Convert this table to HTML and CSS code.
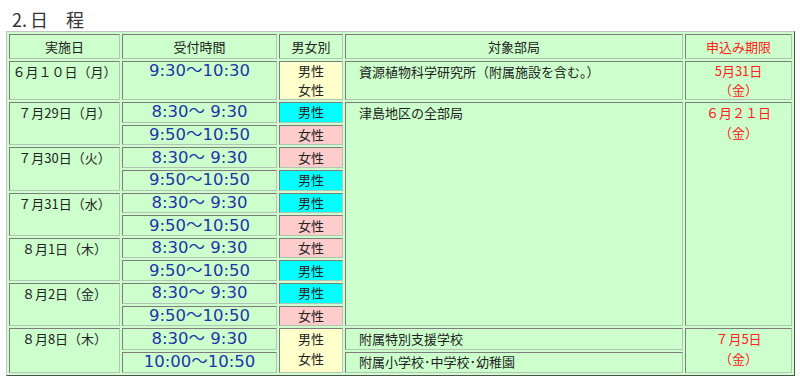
FILE: index.html
```html
<!DOCTYPE html>
<html lang="ja">
<head>
<meta charset="utf-8">
<title>日程</title>
<link rel="stylesheet" href="styles.css">
</head>
<body>
<div class="title"><span class="num">2.</span>日　程</div>
<table class="sched">
  <colgroup>
    <col class="c1"><col class="c2"><col class="c3"><col class="c4"><col class="c5">
  </colgroup>
  <tr class="hd">
    <th>実施日</th><th>受付時間</th><th>男女別</th><th>対象部局</th><th class="red">申込み期限</th>
  </tr>
  <tr class="ra">
    <td class="date">６月１０日（月）</td>
    <td class="time top">9:30～10:30</td>
    <td class="sex both top">男性<br>女性</td>
    <td class="dept top">資源植物科学研究所（附属施設を含む。）</td>
    <td class="dl">5月31日<br>（金）</td>
  </tr>
  <tr class="rb">
    <td class="date" rowspan="2">７月29日（月）</td>
    <td class="time">8:30～ 9:30</td>
    <td class="sex m">男性</td>
    <td class="dept top" rowspan="10">津島地区の全部局</td>
    <td class="dl" rowspan="10">６月２１日<br>（金）</td>
  </tr>
  <tr class="rb"><td class="time">9:50～10:50</td><td class="sex f">女性</td></tr>
  <tr class="rb">
    <td class="date" rowspan="2">７月30日（火）</td>
    <td class="time">8:30～ 9:30</td><td class="sex f">女性</td>
  </tr>
  <tr class="rb"><td class="time">9:50～10:50</td><td class="sex m">男性</td></tr>
  <tr class="rb">
    <td class="date" rowspan="2">７月31日（水）</td>
    <td class="time">8:30～ 9:30</td><td class="sex m">男性</td>
  </tr>
  <tr class="rb"><td class="time">9:50～10:50</td><td class="sex f">女性</td></tr>
  <tr class="rb">
    <td class="date" rowspan="2">８月1日（木）</td>
    <td class="time">8:30～ 9:30</td><td class="sex f">女性</td>
  </tr>
  <tr class="rb"><td class="time">9:50～10:50</td><td class="sex m">男性</td></tr>
  <tr class="rb">
    <td class="date" rowspan="2">８月2日（金）</td>
    <td class="time">8:30～ 9:30</td><td class="sex m">男性</td>
  </tr>
  <tr class="rb"><td class="time">9:50～10:50</td><td class="sex f">女性</td></tr>
  <tr class="rc">
    <td class="date" rowspan="2">８月8日（木）</td>
    <td class="time">8:30～ 9:30</td>
    <td class="sex both top" rowspan="2">男性<br>女性</td>
    <td class="dept">附属特別支援学校</td>
    <td class="dl" rowspan="2">７月5日<br>（金）</td>
  </tr>
  <tr class="rc">
    <td class="time">10:00～10:50</td>
    <td class="dept">附属小学校･中学校･幼稚園</td>
  </tr>
</table>
</body>
</html>
```

FILE: styles.css
```css
html, body {
  margin: 0;
  padding: 0;
  background: #ffffff;
}

body {
  padding: 8px 6px 0 6px;
  font-family: "Noto Sans CJK JP", sans-serif;
  color: #222222;
}

.title {
  font-size: 18px;
  line-height: 23px;
  height: 23px;
  padding-left: 6px;
  color: #333333;
}

.title .num {
  margin-right: 3px;
}

.sched {
  table-layout: fixed;
  width: 789px;
  border-collapse: separate;
  border-spacing: 2px;
  border: 1px solid;
  border-color: #c4c4c4 #505050 #505050 #c4c4c4;
  background: #ccffcc;
  font-size: 13px;
}

.c1 { width: 111px; }
.c2 { width: 155px; }
.c3 { width: 64px; }
.c4 { width: 338px; }
.c5 { width: 107px; }

.sched th,
.sched td {
  border: 1px solid;
  border-color: #7c7c7c #b4c4b4 #b4c4b4 #7c7c7c;
  padding: 0;
  line-height: 16px;
  font-weight: normal;
  text-align: center;
  vertical-align: middle;
  white-space: nowrap;
  overflow: hidden;
}

.hd { height: 25px; }
.ra { height: 39px; }
.rb { height: 20.65px; }
.rc { height: 21.3px; }

.ra td { vertical-align: top; line-height: 18.5px; }

.red { color: #ff2020; }

.sched td.date {
  vertical-align: top;
  line-height: 19px;
}

.sched td.time {
  font-family: "DejaVu Sans", "Noto Sans CJK JP", sans-serif;
  font-size: 16.5px;
  line-height: 16px;
  color: #2233aa;
}

.ra td.time { line-height: 18px; }

.sched td.top { vertical-align: top; }

.sched td.sex.m { background: #00ffff; }
.sched td.sex.f { background: #ffcccc; }
.sched td.sex.both { background: #ffffcc; line-height: 19.5px; }
.ra td.sex.both { line-height: 18.5px; }

.sched td.dept {
  text-align: left;
  padding-left: 13px;
}

.sched td.dept.top { line-height: 19px; }

.sched td.dl {
  vertical-align: top;
  color: #ff2020;
  line-height: 19.5px;
}
.ra td.dl { line-height: 18.5px; }
```
